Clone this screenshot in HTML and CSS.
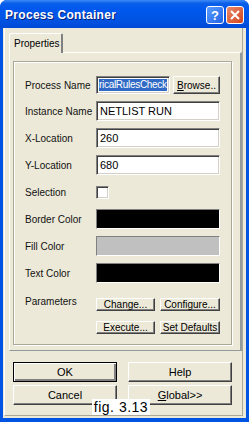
FILE: index.html
```html
<!DOCTYPE html>
<html lang="en">
<head>
  <meta charset="UTF-8" />
  <title>Process Container</title>
  <link rel="stylesheet" href="styles.css">
</head>
<body>
  <div class="window">
    <div class="titlebar">
      <span class="title">Process Container</span>
      <span class="cap-btn cap-help">?</span>
      <span class="cap-btn cap-close">
        <svg width="10" height="10" viewBox="0 0 10 10"><path d="M1 1L9 9M9 1L1 9" stroke="#fff" stroke-width="2" fill="none"/></svg>
      </span>
    </div>

    <div class="client">
      <div class="frame">
        <div class="tabs">
          <div class="tab">Properties</div>
        </div>

        <div class="tab-panel">
          <div class="group">
            <div class="row row-short">
              <span class="label">Process Name</span>
              <div class="ctrl split">
                <div class="input selected"><span>ricalRulesCheck</span></div>
                <button class="btn btn-browse"><u>B</u>rowse..</button>
              </div>
            </div>
            <div class="row">
              <span class="label">Instance Name</span>
              <div class="ctrl"><div class="input">NETLIST RUN</div></div>
            </div>
            <div class="row">
              <span class="label">X-Location</span>
              <div class="ctrl"><div class="input">260</div></div>
            </div>
            <div class="row">
              <span class="label">Y-Location</span>
              <div class="ctrl"><div class="input">680</div></div>
            </div>
            <div class="row">
              <span class="label">Selection</span>
              <div class="ctrl"><span class="checkbox"></span></div>
            </div>
            <div class="row">
              <span class="label">Border Color</span>
              <div class="ctrl"><div class="swatch swatch-black"></div></div>
            </div>
            <div class="row">
              <span class="label">Fill Color</span>
              <div class="ctrl"><div class="swatch swatch-grey"></div></div>
            </div>
            <div class="row">
              <span class="label">Text Color</span>
              <div class="ctrl"><div class="swatch swatch-black"></div></div>
            </div>
            <div class="row row-params">
              <span class="label label-top">Parameters</span>
              <div class="ctrl param-grid">
                <button class="btn">Change...</button>
                <button class="btn">Configure...</button>
                <button class="btn">Execute...</button>
                <button class="btn">Set Defaults</button>
              </div>
            </div>
          </div>
        </div>

        <div class="actions">
          <button class="btn btn-default">OK</button>
          <button class="btn">Help</button>
          <button class="btn">Cancel</button>
          <button class="btn"><u>G</u>lobal&gt;&gt;</button>
        </div>
      </div>
    </div>

    <div class="fig">fig. 3.13</div>
  </div>
</body>
</html>
```

FILE: styles.css
```css
body {
  margin: 0;
  background: #ffffff;
  font-family: 'Liberation Sans', Arial, sans-serif;
}

.window {
  position: relative;
  width: 249px;
  height: 422px;
  box-sizing: border-box;
  background: #0054e3;
  border: 3px solid #0054e3;
  border-top: none;
  border-bottom-width: 4px;
  border-radius: 7px 7px 0 0;
}

/* title bar */
.titlebar {
  display: flex;
  align-items: center;
  height: 28px;
  margin: 0 -3px;
  padding: 2px 5px 0 5px;
  box-sizing: border-box;
  border-radius: 7px 7px 0 0;
  background: linear-gradient(#3d8af7 0%, #0a5fe8 12%, #0058ee 30%, #0054e3 70%, #0049d6 100%);
}

.title {
  flex: 1;
  color: #fff;
  font-weight: bold;
  font-size: 12px;
  letter-spacing: 0.3px;
  text-shadow: 1px 1px #0a1f7a;
}

.cap-btn {
  display: flex;
  align-items: center;
  justify-content: center;
  width: 18px;
  height: 18px;
  box-sizing: border-box;
  border: 1px solid #fff;
  border-radius: 3px;
  color: #fff;
  font-weight: bold;
  font-size: 13px;
}

.cap-help {
  margin-right: 2px;
  background: linear-gradient(135deg, #5b9cff, #1f63e6);
}

.cap-close {
  background: linear-gradient(135deg, #e88a6a, #d2441c);
}

/* client area */
.client {
  height: 390px;
  box-sizing: border-box;
  padding: 0 3px 2px 1px;
  background: #ece9d8;
}

.frame {
  height: 100%;
  box-sizing: border-box;
  border-left: 1px solid #fff;
  border-right: 1px solid #aca899;
  border-bottom: 1px solid #aca899;
}

.tabs {
  display: flex;
  padding: 5px 0 0 4px;
}

.tab {
  width: 54px;
  height: 20px;
  box-sizing: border-box;
  padding: 4px 0 0 4px;
  border: 1px solid #fff;
  border-right: 2px solid #808080;
  border-bottom: none;
  border-radius: 2px 2px 0 0;
  font-size: 10px;
  position: relative;
  margin-bottom: -1px;
  background: #ece9d8;
}

.tab-panel {
  margin-left: 4px;
  width: 233px;
  height: 299px;
  box-sizing: border-box;
  border: 1px solid #fff;
  border-right: 2px solid #919b9c;
  border-bottom: 1px solid #919b9c;
  padding: 8px 0 0 3px;
}

.group {
  width: 219px;
  box-sizing: border-box;
  border: 1px solid #aca899;
  box-shadow: inset 1px 1px #fff, 1px 1px #fff;
  padding: 14px 10px 7px 11px;
  display: flex;
  flex-direction: column;
  gap: 7px;
}

.row {
  display: flex;
  align-items: center;
  height: 20px;
}

.row-short { height: 18px; }

.row-params {
  height: auto;
  align-items: flex-start;
  margin-top: 4px;
}

.label {
  width: 71px;
  font-size: 10px;
  color: #111;
  white-space: nowrap;
}

.label-top { padding-top: 2px; }

.ctrl {
  width: 124px;
  height: 100%;
  display: flex;
  align-items: center;
}

.split { gap: 3px; }

.input {
  flex: 1;
  height: 100%;
  box-sizing: border-box;
  background: #fff;
  border: 1px solid;
  border-color: #808080 #fff #fff #808080;
  box-shadow: inset 1px 1px #404040, inset -1px -1px #d4d0c8;
  padding: 2px 3px;
  font-size: 11px;
  line-height: 14px;
  white-space: nowrap;
  overflow: hidden;
}

.selected {
  display: flex;
  padding: 2px;
  font-size: 10px;
  line-height: 12px;
}

.selected span {
  flex: 1;
  background: #316ac5;
  color: #fff;
  letter-spacing: -0.3px;
}

.checkbox {
  width: 13px;
  height: 13px;
  box-sizing: border-box;
  background: #fff;
  border: 1px solid;
  border-color: #808080 #fff #fff #808080;
  box-shadow: inset 1px 1px #404040, inset -1px -1px #d4d0c8;
}

.swatch {
  width: 100%;
  height: 100%;
  box-sizing: border-box;
  border: 1px solid;
  border-color: #808080 #fff #fff #808080;
}

.swatch-black { background: #000; }
.swatch-grey  { background: #c0c0c0; }

/* buttons */
.btn {
  margin: 0;
  padding: 0;
  box-sizing: border-box;
  background: #ece9d8;
  border: 1px solid;
  border-color: #fff #404040 #404040 #fff;
  box-shadow: inset -1px -1px #808080;
  font-family: 'Liberation Sans', Arial, sans-serif;
  font-size: 10px;
  color: #000;
  white-space: nowrap;
}

.btn-browse {
  width: 47px;
  height: 18px;
}

.param-grid {
  display: grid;
  grid-template-columns: 59px 60px;
  grid-auto-rows: 20px;
  column-gap: 5px;
  row-gap: 3px;
}

.actions {
  display: grid;
  grid-template-columns: 104px 104px;
  grid-auto-rows: 20px;
  column-gap: 11px;
  row-gap: 3px;
  margin-top: 11px;
  padding-left: 8px;
}

.actions .btn { font-size: 11px; }

.btn-default {
  outline: 1px solid #000;
  outline-offset: -1px;
  border-color: #000;
  box-shadow: inset 1px 1px #fff, inset -2px -2px #808080;
}

.fig {
  position: absolute;
  left: 89px;
  top: 399px;
  width: 58px;
  height: 16px;
  background: #fff;
  font-size: 14px;
  line-height: 16px;
  text-align: center;
  letter-spacing: 0.5px;
}
```
